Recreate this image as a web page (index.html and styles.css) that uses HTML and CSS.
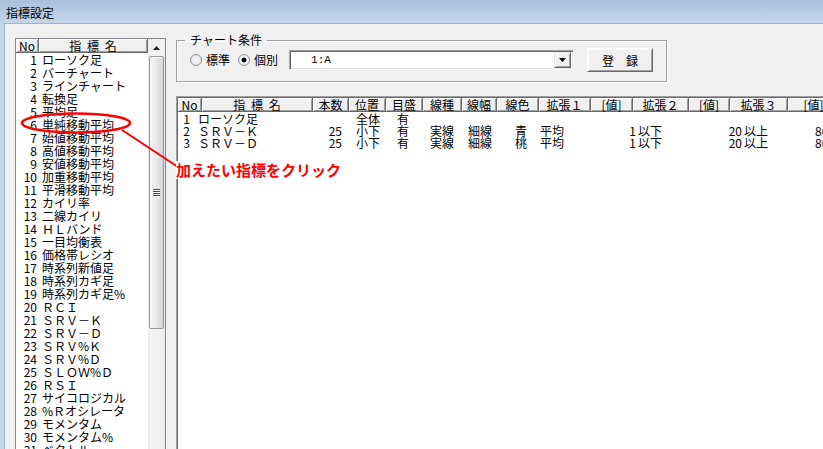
FILE: index.html
```html
<!DOCTYPE html>
<html lang="ja">
<head>
<meta charset="utf-8">
<title>指標設定</title>
<link rel="stylesheet" href="styles.css">
</head>
<body>
<div class="window">
  <div class="titlebar"><span class="title">指標設定</span></div>
  <div class="client">
    <div class="listbox">
      <div class="list-main">
        <div class="list-head">
          <div class="hcell h-no">No</div>
          <div class="hcell h-name">指 標 名</div>
        </div>
        <div class="list-rows">
          <div class="lrow"><span class="ln">1</span><span class="lt">ローソク足</span></div>
          <div class="lrow"><span class="ln">2</span><span class="lt">バーチャート</span></div>
          <div class="lrow"><span class="ln">3</span><span class="lt">ラインチャート</span></div>
          <div class="lrow"><span class="ln">4</span><span class="lt">転換足</span></div>
          <div class="lrow"><span class="ln">5</span><span class="lt">平均足</span></div>
          <div class="lrow"><span class="ln">6</span><span class="lt">単純移動平均</span></div>
          <div class="lrow"><span class="ln">7</span><span class="lt">始値移動平均</span></div>
          <div class="lrow"><span class="ln">8</span><span class="lt">高値移動平均</span></div>
          <div class="lrow"><span class="ln">9</span><span class="lt">安値移動平均</span></div>
          <div class="lrow"><span class="ln">10</span><span class="lt">加重移動平均</span></div>
          <div class="lrow"><span class="ln">11</span><span class="lt">平滑移動平均</span></div>
          <div class="lrow"><span class="ln">12</span><span class="lt">カイリ率</span></div>
          <div class="lrow"><span class="ln">13</span><span class="lt">二線カイリ</span></div>
          <div class="lrow"><span class="ln">14</span><span class="lt">ＨＬバンド</span></div>
          <div class="lrow"><span class="ln">15</span><span class="lt">一目均衡表</span></div>
          <div class="lrow"><span class="ln">16</span><span class="lt">価格帯レシオ</span></div>
          <div class="lrow"><span class="ln">17</span><span class="lt">時系列新値足</span></div>
          <div class="lrow"><span class="ln">18</span><span class="lt">時系列カギ足</span></div>
          <div class="lrow"><span class="ln">19</span><span class="lt">時系列カギ足%</span></div>
          <div class="lrow"><span class="ln">20</span><span class="lt">ＲＣＩ</span></div>
          <div class="lrow"><span class="ln">21</span><span class="lt">ＳＲＶ－Ｋ</span></div>
          <div class="lrow"><span class="ln">22</span><span class="lt">ＳＲＶ－Ｄ</span></div>
          <div class="lrow"><span class="ln">23</span><span class="lt">ＳＲＶ%Ｋ</span></div>
          <div class="lrow"><span class="ln">24</span><span class="lt">ＳＲＶ%Ｄ</span></div>
          <div class="lrow"><span class="ln">25</span><span class="lt">ＳＬＯＷ%Ｄ</span></div>
          <div class="lrow"><span class="ln">26</span><span class="lt">ＲＳＩ</span></div>
          <div class="lrow"><span class="ln">27</span><span class="lt">サイコロジカル</span></div>
          <div class="lrow"><span class="ln">28</span><span class="lt">%Ｒオシレータ</span></div>
          <div class="lrow"><span class="ln">29</span><span class="lt">モメンタム</span></div>
          <div class="lrow"><span class="ln">30</span><span class="lt">モメンタム%</span></div>
          <div class="lrow"><span class="ln">31</span><span class="lt">ベクトル</span></div>
        </div>
      </div>
      <div class="vscroll">
        <div class="sb-up"><svg width="7" height="4" viewBox="0 0 7 4"><polygon points="3.5,0 7,4 0,4" fill="#1e1e1e"/></svg></div>
        <div class="sb-thumb"><span class="grip"></span></div>
      </div>
    </div>

    <div class="right">
      <fieldset class="group">
        <legend>チャート条件</legend>
        <div class="group-row">
          <span class="radio"></span><span class="rlabel">標準</span>
          <span class="radio checked"></span><span class="rlabel">個別</span>
          <div class="combo">
            <span class="combo-text">1:A</span>
            <span class="combo-btn"><svg width="7" height="4" viewBox="0 0 7 4"><polygon points="0,0 7,0 3.5,4" fill="#000"/></svg></span>
          </div>
          <button class="btn">登　録</button>
        </div>
      </fieldset>

      <div class="table">
        <div class="thead">
          <div class="th w-no">No</div>
          <div class="th w-name">指 標 名</div>
          <div class="th w-cnt">本数</div>
          <div class="th w-pos">位置</div>
          <div class="th w-scl">目盛</div>
          <div class="th w-typ">線種</div>
          <div class="th w-wid">線幅</div>
          <div class="th w-col">線色</div>
          <div class="th w-e1">拡張１</div>
          <div class="th w-v1">[値]</div>
          <div class="th w-e2">拡張２</div>
          <div class="th w-v2">[値]</div>
          <div class="th w-e3">拡張３</div>
          <div class="th w-v3">[値]</div>
        </div>
        <div class="tr">
          <span class="d-no">1</span><span class="d-name">ローソク足</span><span class="d-cnt"></span><span class="d-pos">全体</span><span class="d-scl">有</span>
        </div>
        <div class="tr">
          <span class="d-no">2</span><span class="d-name">ＳＲＶ－Ｋ</span><span class="d-cnt">25</span><span class="d-pos">小下</span><span class="d-scl">有</span><span class="d-typ">実線</span><span class="d-wid">細線</span><span class="d-col">青</span><span class="d-e1">平均</span><span class="d-v1">1</span><span class="d-e2">以下</span><span class="d-v2">20</span><span class="d-e3">以上</span><span class="d-v3">80</span>
        </div>
        <div class="tr">
          <span class="d-no">3</span><span class="d-name">ＳＲＶ－Ｄ</span><span class="d-cnt">25</span><span class="d-pos">小下</span><span class="d-scl">有</span><span class="d-typ">実線</span><span class="d-wid">細線</span><span class="d-col">桃</span><span class="d-e1">平均</span><span class="d-v1">1</span><span class="d-e2">以下</span><span class="d-v2">20</span><span class="d-e3">以上</span><span class="d-v3">80</span>
        </div>
      </div>
    </div>
  </div>

  <svg class="annot" width="823" height="449" viewBox="0 0 823 449">
    <ellipse cx="76" cy="123" rx="54" ry="9.5" fill="none" stroke="#ff0000" stroke-width="2.5"/>
    <line x1="122" y1="130" x2="178" y2="167" stroke="#ff0000" stroke-width="2"/>
  </svg>
  <div class="callout">加えたい指標をクリック</div>
</div>
</body>
</html>
```

FILE: styles.css
```css
html, body {
  margin: 0;
  padding: 0;
}

body {
  font-family: "Noto Sans CJK JP", "Noto Sans", sans-serif;
  font-size: 12px;
  color: #000;
  background: #f0f0f0;
  overflow: hidden;
}

.window {
  position: relative;
  width: 823px;
  height: 449px;
  overflow: hidden;
  background: #c3d6ec;
  display: flex;
  flex-direction: column;
}

.titlebar {
  flex: none;
  height: 23px;
  display: flex;
  align-items: center;
  padding-left: 6px;
  background: linear-gradient(#a8c0dc, #c3d6ec);
}

.title {
  font-size: 12px;
  line-height: 14px;
  padding-top: 2px;
}

.client {
  flex: 1;
  min-height: 0;
  margin-left: 4px;
  border-top: 1px solid #9fb4cd;
  border-left: 1px solid #9fb4cd;
  background: #f0f0f0;
  display: flex;
  align-items: flex-start;
  padding: 9px 0 0 10px;
  overflow: hidden;
}

/* ---------- left list ---------- */
.listbox {
  flex: none;
  width: 151px;
  height: 440px;
  margin-top: 5px;
  box-sizing: border-box;
  border: 1px solid #828790;
  display: flex;
  background: #fff;
}

.list-main {
  width: 132px;
  overflow: hidden;
}

.list-head {
  display: flex;
  height: 14px;
}

.hcell {
  box-sizing: border-box;
  height: 14px;
  line-height: 13px;
  text-align: center;
  background: #f0f0f0;
  border-right: 1px solid #696969;
  border-bottom: 1px solid #696969;
  box-shadow: inset 1px 1px 0 #fff, inset -1px -1px 0 #a0a0a0;
  white-space: nowrap;
}

.h-no { width: 23px; }
.h-name { width: 109px; word-spacing: 3px; }

.lrow {
  display: flex;
  height: 13px;
  line-height: 13px;
  white-space: nowrap;
}

.ln {
  flex: none;
  width: 21px;
  text-align: right;
}

.lt {
  margin-left: 5px;
}

.vscroll {
  width: 17px;
  flex: none;
  display: flex;
  flex-direction: column;
  background: linear-gradient(90deg, #e6e6e6 0, #f3f3f3 2px, #f0f0f0 14px, #e8e8e8 17px);
}

.sb-up {
  height: 17px;
  display: flex;
  align-items: center;
  justify-content: center;
  background: #f0f0f0;
}

.sb-thumb {
  margin: 0 1px 0 1px;
  height: 273px;
  box-sizing: border-box;
  border: 1px solid #979797;
  border-radius: 2px;
  background: linear-gradient(90deg, #f4f4f4 0, #e9e9e9 50%, #d6d6d6 100%);
  box-shadow: inset 1px 1px 0 #fcfcfc;
  display: flex;
  align-items: center;
  justify-content: center;
}

.grip {
  width: 7px;
  height: 8px;
  background: repeating-linear-gradient(#4a4a4a 0 1px, #f6f6f6 1px 2px);
}

/* ---------- right ---------- */
.right {
  flex: 1;
  min-width: 0;
  margin-left: 10px;
  display: flex;
  flex-direction: column;
}

.group {
  margin: 0;
  width: 491px;
  box-sizing: border-box;
  border: 1px solid #a0a0a0;
  box-shadow: 1px 1px 0 #fff, inset 1px 1px 0 #fff;
  padding: 1px 10px 9px 8px;
}

.group legend {
  padding: 0 5px;
  font-size: 12px;
  line-height: 14px;
}

.group-row {
  display: flex;
  align-items: center;
  height: 24px;
  white-space: nowrap;
}

.group-row > * {
  flex: none;
}

.radio {
  width: 12px;
  height: 12px;
  box-sizing: border-box;
  border: 1px solid #8e8f8f;
  border-radius: 50%;
  background: radial-gradient(circle, #f6f6f6 0, #e2e2e2 100%);
  margin-left: 5px;
}

.radio.checked {
  margin-left: 8px;
  background: radial-gradient(circle, #111 0 2.2px, #f4f4f4 2.8px, #e2e2e2 100%);
}

.rlabel {
  margin-left: 4px;
  line-height: 14px;
}

.combo {
  margin-left: 11px;
  width: 285px;
  height: 20px;
  box-sizing: border-box;
  border-top: 1px solid #a0a0a0;
  border-left: 1px solid #a0a0a0;
  border-right: 1px solid #fff;
  border-bottom: 1px solid #fff;
  box-shadow: inset 1px 1px 0 #696969, inset -1px -1px 0 #e3e3e3;
  background: #fff;
  display: flex;
  align-items: center;
  padding: 2px 2px 2px 0;
}

.combo-text {
  flex: 1;
  padding-left: 21px;
  line-height: 14px;
  font-family: "Liberation Mono", monospace;
  font-size: 11px;
}

.combo-btn {
  width: 17px;
  height: 16px;
  box-sizing: border-box;
  background: #f0f0f0;
  border-top: 1px solid #e3e3e3;
  border-left: 1px solid #e3e3e3;
  border-right: 1px solid #696969;
  border-bottom: 1px solid #696969;
  box-shadow: inset 1px 1px 0 #fff, inset -1px -1px 0 #a0a0a0;
  display: flex;
  align-items: center;
  justify-content: center;
}

.btn {
  margin-left: 13px;
  width: 66px;
  height: 24px;
  box-sizing: border-box;
  padding: 0;
  font-family: "Noto Sans CJK JP", sans-serif;
  font-size: 12px;
  color: #000;
  background: #f0f0f0;
  border-top: 1px solid #fff;
  border-left: 1px solid #fff;
  border-right: 1px solid #696969;
  border-bottom: 1px solid #696969;
  box-shadow: inset 1px 1px 0 #f8f8f8, inset -1px -1px 0 #a0a0a0;
}

/* ---------- table ---------- */
.table {
  margin-top: 14px;
  width: 700px;
  height: 400px;
  background: #fff;
  border-top: 1px solid #a0a0a0;
  border-left: 1px solid #a0a0a0;
  box-shadow: inset 1px 1px 0 #696969;
  padding: 1px 0 0 1px;
}

.thead {
  display: flex;
  height: 14px;
  margin-bottom: 1px;
}

.th {
  flex: none;
  box-sizing: border-box;
  height: 14px;
  line-height: 13px;
  text-align: center;
  white-space: nowrap;
  background: #f0f0f0;
  border-right: 1px solid #696969;
  border-bottom: 1px solid #696969;
  box-shadow: inset 1px 1px 0 #fff, inset -1px -1px 0 #a0a0a0;
}

.w-no { width: 24px; }
.w-name { width: 111px; word-spacing: 3px; }
.w-cnt { width: 36px; }
.w-pos { width: 37px; }
.w-scl { width: 37px; }
.w-typ { width: 39px; }
.w-wid { width: 35px; }
.w-col { width: 42px; }
.w-e1 { width: 52px; }
.w-v1 { width: 42px; }
.w-e2 { width: 56px; }
.w-v2 { width: 41px; }
.w-e3 { width: 58px; }
.w-v3 { width: 52px; }

.tr {
  display: flex;
  height: 12px;
  line-height: 12px;
  white-space: nowrap;
}

.tr span { flex: none; }

.d-no { width: 12px; text-align: right; }
.d-name { width: 116px; margin-left: 8px; }
.d-cnt { width: 28px; text-align: right; }
.d-pos { width: 41px; padding-left: 14px; }
.d-scl { width: 33px; }
.d-typ { width: 38px; }
.d-wid { width: 47px; }
.d-col { width: 25px; }
.d-e1 { width: 24px; }
.d-v1 { width: 72px; text-align: right; }
.d-e2 { width: 24px; padding-left: 2px; }
.d-v2 { width: 80px; text-align: right; }
.d-e3 { width: 24px; padding-left: 2px; }
.d-v3 { width: 29px; padding-left: 47px; }

/* ---------- annotation ---------- */
.annot {
  position: absolute;
  left: 0;
  top: 0;
  pointer-events: none;
}

.callout {
  position: absolute;
  left: 176px;
  top: 161px;
  background: #fff;
  color: #ff0000;
  font-size: 15px;
  font-weight: bold;
  line-height: 18px;
  white-space: nowrap;
}
```
